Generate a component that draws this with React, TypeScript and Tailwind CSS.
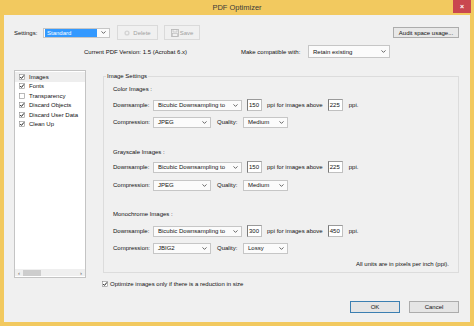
import React from 'react';

const Chevron = () => (
    <svg width="5" height="3" viewBox="0 0 5 3" className="shrink-0">
        <path d="M0.5 0.4 L2.5 2.4 L4.5 0.4" fill="none" stroke="#555" strokeWidth="0.9" />
    </svg>
);

function Select({ value, className, selected }: { value: string; className: string; selected?: boolean }) {
    return (
        <div className={`flex items-center justify-between border border-[#c6c6c6] bg-[#fbfbfb] pr-[3px] ${selected ? 'pl-[1px]' : 'pl-[4px]'} ${className}`}>
            {selected ? (
                <span className="mr-[4px] flex h-[8px] flex-1 items-center bg-[#3399ff] pl-[2px] text-white">{value}</span>
            ) : (
                <span className="whitespace-nowrap">{value}</span>
            )}
            <Chevron />
        </div>
    );
}

function NumInput({ value }: { value: string }) {
    return (
        <div className="flex h-[12px] w-[15px] shrink-0 items-center border border-[#c0c0c0] border-l-[#7a7a7a] border-t-[#9a9a9a] bg-white pl-[1px]">
            {value}
        </div>
    );
}

function Check({ checked }: { checked: boolean }) {
    return (
        <svg width="6" height="6" viewBox="0 0 6 6" className="shrink-0">
            <rect x="0.5" y="0.5" width="5" height="5" fill="white" stroke="#8a8a8a" strokeWidth="0.6" />
            {checked && <path d="M1.2 3 L2.5 4.4 L4.9 1.4" fill="none" stroke="#222" strokeWidth="1" />}
        </svg>
    );
}

function DownsampleRow({ dpi, above }: { dpi: string; above: string }) {
    return (
        <div className="flex h-[14px] items-center">
            <span className="w-[40px]">Downsample:</span>
            <Select value="Bicubic Downsampling to" className="h-[11px] w-[89px]" />
            <div className="ml-[5px]">
                <NumInput value={dpi} />
            </div>
            <span className="ml-[5px] mr-[5px] whitespace-nowrap">ppi for images above</span>
            <NumInput value={above} />
            <span className="ml-[6px]">ppi.</span>
        </div>
    );
}

function CompressionRow({ method, quality }: { method: string; quality: string }) {
    return (
        <div className="flex h-[14px] items-center">
            <span className="w-[40px]">Compression:</span>
            <Select value={method} className="h-[11px] w-[58px]" />
            <span className="ml-[6px] w-[26px]">Quality:</span>
            <Select value={quality} className="h-[11px] w-[45px]" />
        </div>
    );
}

const panels = [
    { label: 'Images', checked: true },
    { label: 'Fonts', checked: true },
    { label: 'Transparency', checked: false },
    { label: 'Discard Objects', checked: true },
    { label: 'Discard User Data', checked: true },
    { label: 'Clean Up', checked: true },
];

export default function App() {
    return (
        <div className="h-[326px] w-[474px] overflow-hidden bg-[#f2c95f] font-['Liberation_Sans',Arial,sans-serif] text-[6px] leading-[8px] text-[#111]">
            {/* Title bar */}
            <div className="relative flex h-[15px] items-center justify-center">
                <span className="text-[7.5px] text-[#3a3a3a]">PDF Optimizer</span>
                <div className="absolute right-[3px] top-0 flex h-[13px] w-[18px] items-center justify-center bg-[#c9474f] text-[7px] font-bold text-white">
                    ×
                </div>
            </div>

            {/* Body */}
            <div className="mx-[4px] h-[307px] bg-[#f0f0f0] pl-[10px] pt-[10px]">
                {/* Settings row */}
                <div className="flex h-[15px] items-center">
                    <span className="w-[29px]">Settings:</span>
                    <Select value="Standard" selected className="h-[10px] w-[67px]" />
                    <div className="ml-[7px] flex h-[15px] w-[41px] items-center justify-center gap-[3px] border border-[#dadada] text-[#a0a0a0]">
                        <svg width="6" height="6" viewBox="0 0 6 6">
                            <circle cx="3" cy="3" r="2.6" fill="#d4d4d4" />
                            <circle cx="3" cy="3" r="1.2" fill="#f0f0f0" />
                        </svg>
                        <span>Delete</span>
                    </div>
                    <div className="ml-[6px] flex h-[15px] w-[36px] items-center justify-center gap-[1px] border border-[#dadada] text-[#a0a0a0]">
                        <svg width="8" height="8" viewBox="0 0 8 8">
                            <rect x="0.5" y="0.5" width="7" height="7" fill="none" stroke="#b8b8b8" strokeWidth="0.8" />
                            <rect x="2" y="0.5" width="4" height="2.5" fill="none" stroke="#b8b8b8" strokeWidth="0.6" />
                            <rect x="1.6" y="4.5" width="4.8" height="3" fill="none" stroke="#b8b8b8" strokeWidth="0.6" />
                        </svg>
                        <span>Save</span>
                    </div>
                    <div className="ml-auto mr-[11px] flex h-[11px] w-[66px] items-center justify-center border border-[#acacac] bg-[#e8e8e8]">
                        Audit space usage...
                    </div>
                </div>

                {/* Version row */}
                <div className="mt-[5px] flex h-[13px] items-center">
                    <span className="ml-[70px] w-[157px]">Current PDF Version: 1.5 (Acrobat 6.x)</span>
                    <span className="w-[67px]">Make compatible with:</span>
                    <Select value="Retain existing" className="h-[13px] w-[82px]" />
                </div>

                {/* Main area */}
                <div className="mt-[12px] flex h-[208px]">
                    {/* Panel list */}
                    <div className="flex w-[72px] flex-col border border-[#c4c4c4] bg-white">
                        <div className="flex-1 pt-[1px]">
                            {panels.map((p, i) => (
                                <div
                                    key={p.label}
                                    className={`flex h-[9.5px] items-center gap-[4px] pl-[4px] ${i === 0 ? 'bg-[#eeeeee]' : ''}`}
                                >
                                    <Check checked={p.checked} />
                                    <span>{p.label}</span>
                                </div>
                            ))}
                        </div>
                        <div className="mb-[1px] flex h-[7px] items-center justify-between bg-[#efefef] px-[3px] text-[#555]">
                            <span className="flex items-center">
                                <span>‹</span>
                                <span className="ml-[3px] h-[6px] w-[18px] bg-[#cdcdcd]" />
                            </span>
                            <span>›</span>
                        </div>
                    </div>

                    {/* Image settings group */}
                    <fieldset className="ml-[17px] mt-[2px] w-[356px] self-start border border-[#dcdcdc] pb-[2px] pl-[9px] pr-[9px]">
                        <legend className="ml-[-7px] px-[1px] leading-[8px]">Image Settings</legend>

                        <div className="mt-[3px] flex h-[12px] items-center">Color Images :</div>
                        <div className="mt-[3px]">
                            <DownsampleRow dpi="150" above="225" />
                        </div>
                        <div className="mt-[3px]">
                            <CompressionRow method="JPEG" quality="Medium" />
                        </div>

                        <div className="mt-[17px] flex h-[12px] items-center">Grayscale Images :</div>
                        <div className="mt-[2px]">
                            <DownsampleRow dpi="150" above="225" />
                        </div>
                        <div className="mt-[4px]">
                            <CompressionRow method="JPEG" quality="Medium" />
                        </div>

                        <div className="mt-[16px] flex h-[12px] items-center">Monochrome Images :</div>
                        <div className="mt-[4px]">
                            <DownsampleRow dpi="300" above="450" />
                        </div>
                        <div className="mt-[3px]">
                            <CompressionRow method="JBIG2" quality="Lossy" />
                        </div>

                        <div className="mt-[3px] flex h-[12px] items-center justify-end">
                            All units are in pixels per inch (ppi).
                        </div>
                    </fieldset>
                </div>

                {/* Optimize checkbox */}
                <div className="ml-[88px] mt-[1px] flex h-[10px] items-center gap-[2px]">
                    <Check checked />
                    <span>Optimize images only if there is a reduction in size</span>
                </div>

                {/* Buttons */}
                <div className="mr-[11px] mt-[12px] flex h-[12px] justify-end gap-[9px]">
                    <div className="flex w-[50px] items-center justify-center border border-[#3c7fb1] bg-[#e5e5e5]">OK</div>
                    <div className="flex w-[50px] items-center justify-center border border-[#acacac] bg-[#e5e5e5]">Cancel</div>
                </div>
            </div>
        </div>
    );
}
